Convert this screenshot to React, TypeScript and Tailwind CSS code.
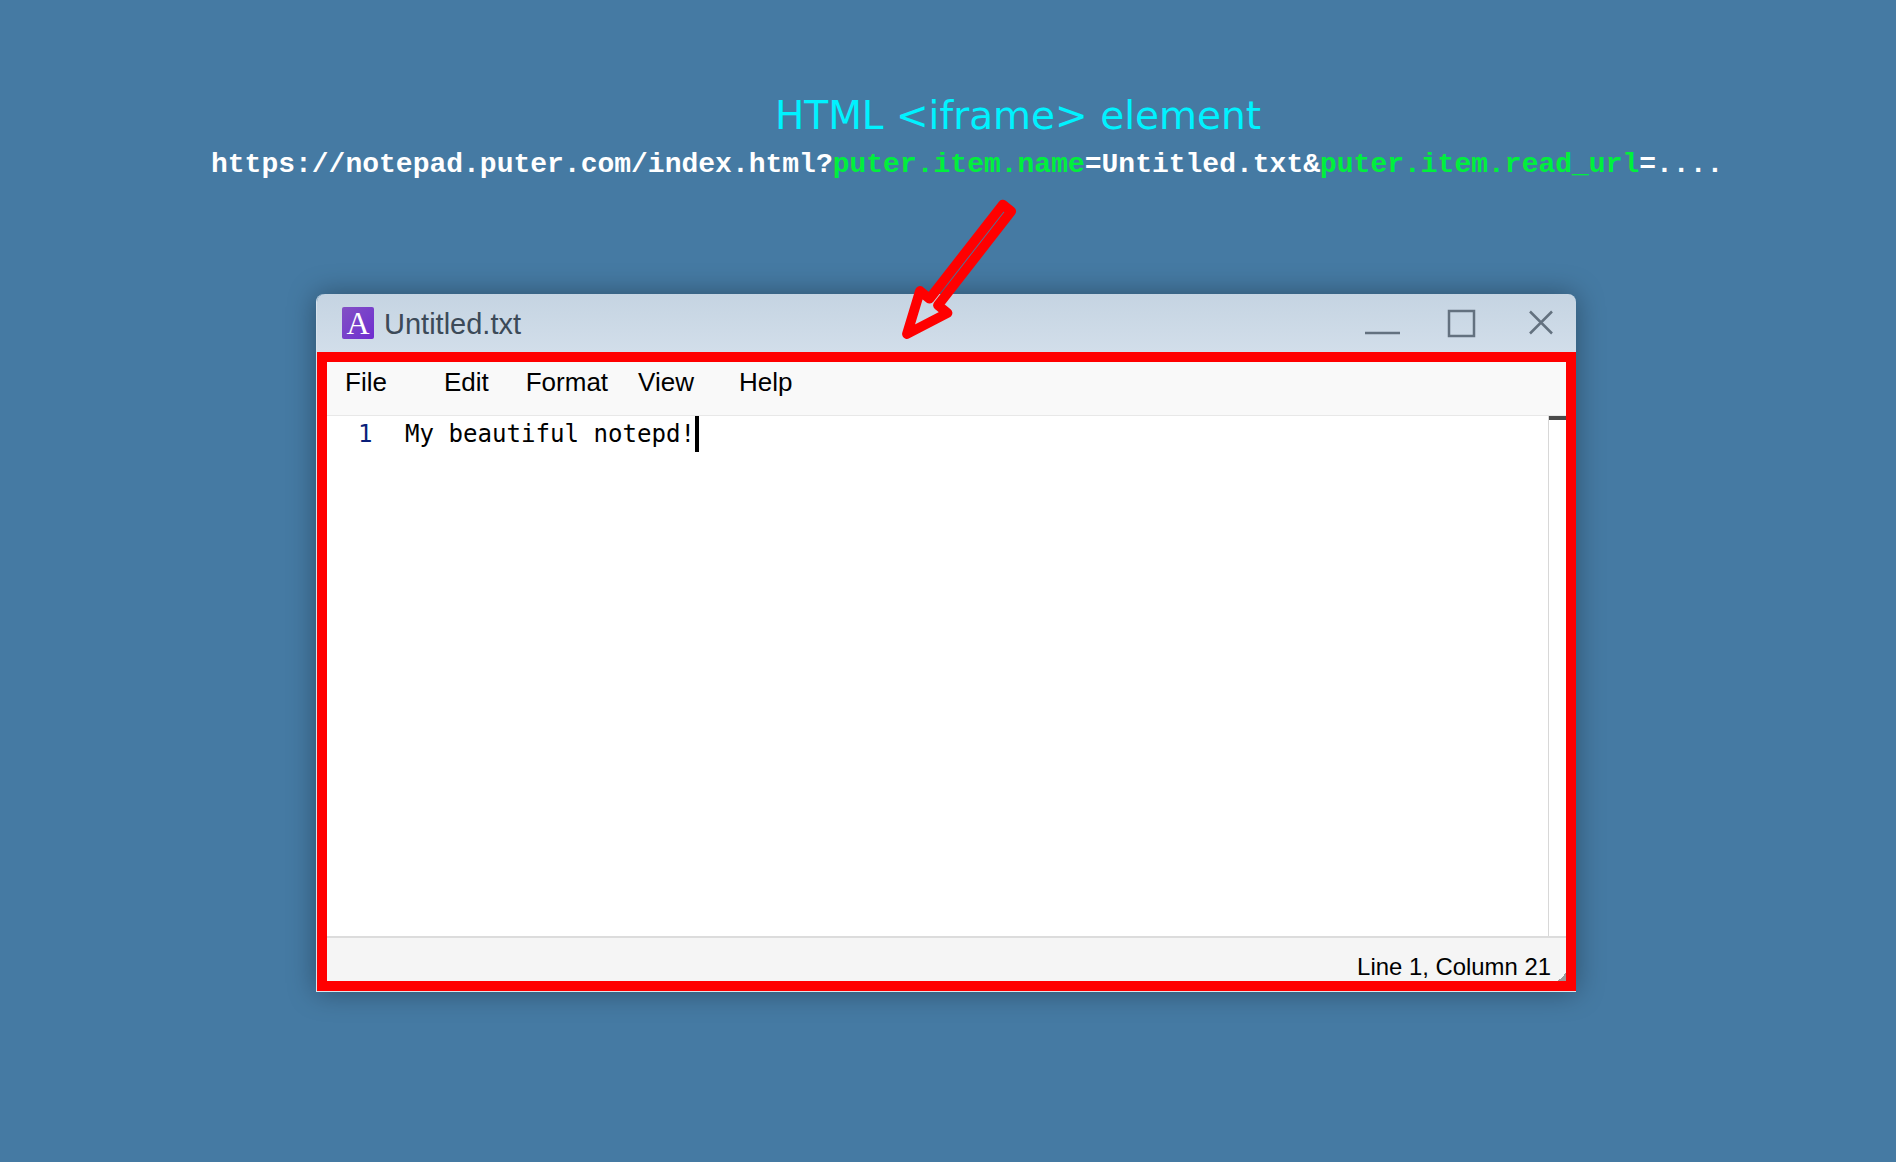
function NotepadIcon() {
  return (
    <div className="flex h-8 w-8 items-center justify-center rounded-[2px] bg-gradient-to-br from-[#8350c4] to-[#6f2bd0] font-['Liberation_Serif',serif] text-[32px] leading-none text-white">
      A
    </div>
  )
}

function WindowControls() {
  return (
    <svg className="mt-[2px] ml-auto" width="190" height="40" viewBox="0 0 190 40" fill="none" stroke="#63717f" strokeWidth="2.5" aria-hidden>
      <path d="M0 29h35" />
      <rect x="84" y="7" width="25" height="25" />
      <path d="M165 7.5l22 22M187 7.5l-22 22" />
    </svg>
  )
}

function PointerArrow() {
  return (
    <svg className="absolute left-[880px] top-[190px]" width="160" height="160" viewBox="880 190 160 160" fill="none" aria-hidden>
      <polygon
        points="1002.8,204.7 1011.2,211.3 938,305.3 947.5,313 907,334 920,291 929.5,298.7"
        stroke="#ff0000"
        strokeWidth="9.8"
        strokeLinejoin="round"
      />
    </svg>
  )
}

export default function App() {
  return (
    <div className="relative flex h-[1162px] w-[1896px] flex-col overflow-hidden bg-[#457aa3]">
      <h1 className="mt-[86px] ml-[775px] h-[59px] whitespace-nowrap font-['DejaVu_Sans',sans-serif] text-[39px] leading-[60px] font-normal text-[#00f2ff]">
        HTML &lt;iframe&gt; element
      </h1>
      <p className="ml-[211px] h-[40px] whitespace-nowrap font-['Liberation_Mono',monospace] text-[28px] leading-[40px] font-bold text-white">
        https://notepad.puter.com/index.html?
        <span className="text-[#00f03c]">puter.item.name</span>
        =Untitled.txt&amp;
        <span className="text-[#00f03c]">puter.item.read_url</span>
        =....
      </p>

      <div className="mt-[109px] ml-[316px] flex h-[698px] w-[1260px] flex-col rounded-t-[8px] border-b border-l border-white/80 shadow-[0_0_28px_rgba(0,0,0,0.35)]">
        <div className="flex h-[58px] shrink-0 items-center rounded-t-[8px] bg-gradient-to-b from-[#c5d4e2] to-[#d2deea] pr-[21px] pl-[25px]">
          <NotepadIcon />
          <span className="mt-[2px] ml-[10px] font-['Liberation_Sans',sans-serif] text-[29px] leading-none text-[#3c4a58]">Untitled.txt</span>
          <WindowControls />
        </div>

        <div className="flex min-h-0 flex-1 flex-col border-[10px] border-[#ff0000] font-['Liberation_Sans',sans-serif] text-black">
          <nav className="flex h-[53px] shrink-0 items-start bg-[#f9f9f9] pt-[5px] pl-[18px] text-[26px] leading-[30px]">
            <span>File</span>
            <span className="ml-[57px]">Edit</span>
            <span className="ml-[37px]">Format</span>
            <span className="ml-[30px]">View</span>
            <span className="ml-[45px]">Help</span>
          </nav>

          <div className="flex min-h-0 flex-1 border-t border-[#e8e8e8] bg-white">
            <div className="flex flex-1 items-start font-['DejaVu_Sans_Mono',monospace] text-[24.1px] leading-[36px]">
              <span className="ml-[31px] w-[47px] text-[#0a1f7a]">1</span>
              <span className="whitespace-nowrap">My beautiful notepd!</span>
              <span className="h-[36px] w-[4px] bg-black" />
            </div>
            <div className="flex w-[18px] shrink-0 flex-col border-l border-[#d8d8d8]">
              <div className="h-[4px] bg-[#4a4a4a]" />
            </div>
          </div>

          <div className="relative flex h-[45px] shrink-0 items-end justify-end border-t-2 border-[#dcdcdc] bg-[#f5f5f5] pr-[15px] text-[23.9px] leading-[28px]">
            <span>Line 1, Column 21</span>
            <span className="absolute right-0 bottom-0 h-[8px] w-[8px] bg-gradient-to-br from-transparent from-50% to-[#9a9a9a] to-50%" />
          </div>
        </div>
      </div>

      <PointerArrow />
    </div>
  )
}
